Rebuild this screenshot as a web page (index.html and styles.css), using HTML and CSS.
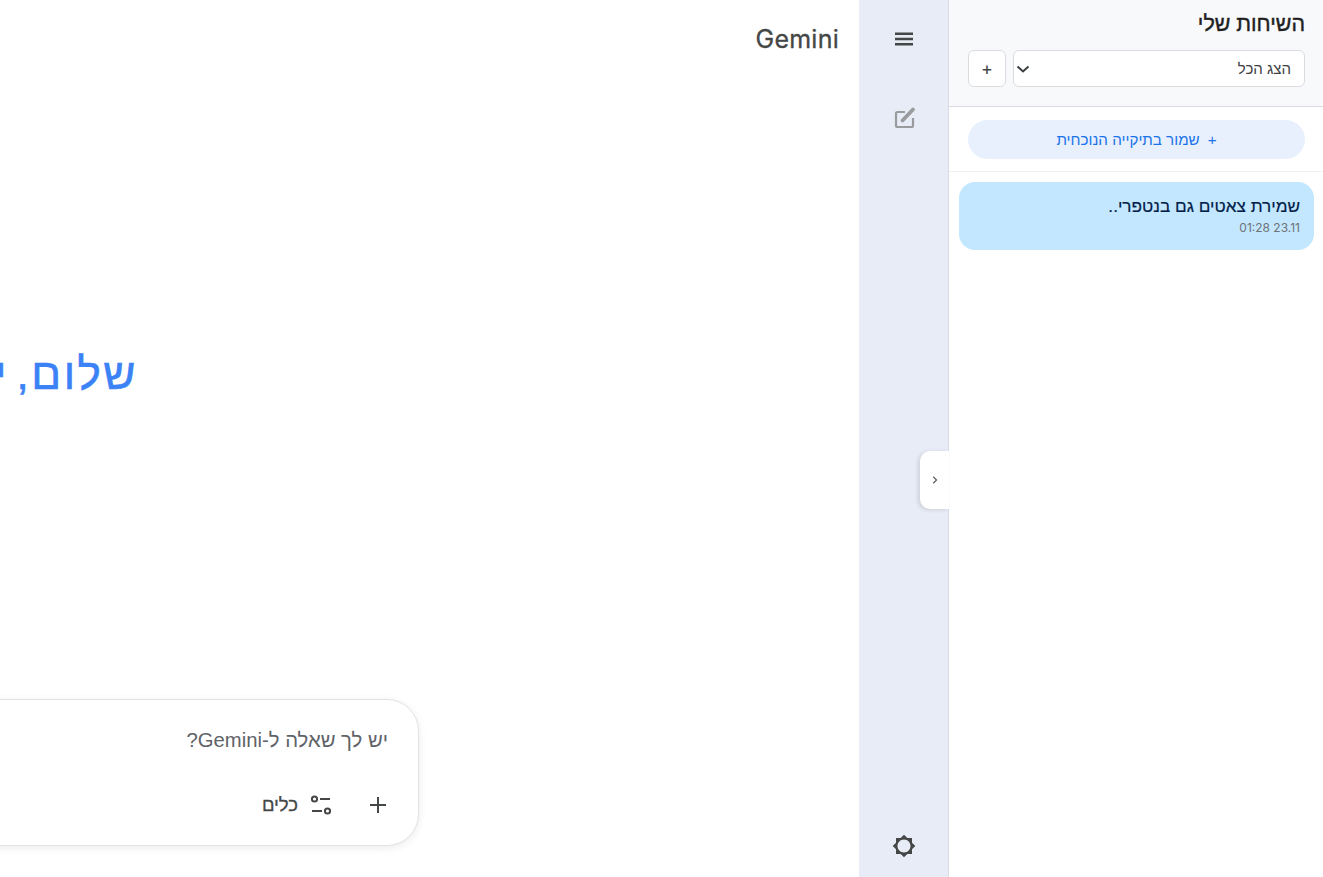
FILE: index.html
```html
<!DOCTYPE html>
<html lang="he">
  <head>
    <meta charset="UTF-8" />
    <meta name="viewport" content="width=device-width, initial-scale=1.0" />
    <title>Gemini</title>
    <link rel="stylesheet" href="styles.css">
  </head>
  <body>
    <div class="app">
      <!-- Main chat area -->
      <main class="main">
        <div class="brand">Gemini</div>
        <div class="greeting">שלום, י</div>
        <div class="composer">
          <div class="composer-text">יש לך שאלה ל-Gemini?</div>
          <div class="composer-tools">
            <svg class="icon-plus" width="24" height="24" viewBox="0 0 24 24">
              <path d="M12 4v16M4 12h16" fill="none" stroke="#444746" stroke-width="2" />
            </svg>
            <div class="tools-btn">
              <svg width="24" height="24" viewBox="0 0 24 24" fill="none" stroke="#444746" stroke-width="2">
                <circle cx="5.500" cy="6" r="2.600" />
                <path d="M11 6h10" />
                <circle cx="18.500" cy="18" r="2.600" />
                <path d="M3 18h10" />
              </svg>
              <span>כלים</span>
            </div>
          </div>
        </div>
      </main>

      <!-- Icon rail -->
      <nav class="rail">
        <svg class="rail-icon" width="24" height="24" viewBox="0 0 24 24">
          <path d="M3 5.500h18V8H3zM3 10.750h18v2.500H3zM3 16h18v2.500H3z" fill="#444746" />
        </svg>
        <svg class="rail-icon rail-edit" width="24" height="24" viewBox="0 0 24 24" fill="none" stroke="#9a9b9e">
          <path d="M13 6H5.500A1.500 1.500 0 0 0 4 7.500v12A1.500 1.500 0 0 0 5.500 21h14a1.500 1.500 0 0 0 1.500-1.500V12" stroke-width="2.200" />
          <path d="M10.500 14.500 21 3.500" stroke-width="3.800" stroke-linecap="round" />
        </svg>
        <svg class="rail-icon rail-theme" width="24" height="24" viewBox="0 0 24 24">
          <path d="M20 15.310 23.310 12 20 8.690V4h-4.690L12 .69 8.690 4H4v4.690L.69 12 4 15.310V20h4.690L12 23.310 15.310 20H20v-4.690zM12 18.500c-3.590 0-6.500-2.910-6.500-6.500S8.410 5.500 12 5.500s6.500 2.910 6.500 6.500-2.910 6.500-6.500 6.500z" fill="#444746" />
        </svg>
      </nav>

      <!-- Saved chats -->
      <aside class="panel">
        <button class="panel-toggle" type="button">
          <svg width="10" height="10" viewBox="0 0 10 10">
            <path d="M3.200 1.800 6.500 5 3.200 8.200" fill="none" stroke="#5f6368" stroke-width="1.300" />
          </svg>
        </button>
        <div class="panel-head">
          <h1>השיחות שלי</h1>
          <div class="filter-row">
            <select class="filter-select">
              <option>הצג הכל</option>
            </select>
            <button class="add-btn" type="button">+</button>
          </div>
        </div>
        <div class="save-row">
          <button class="save-btn" type="button"><span class="save-plus">+</span>שמור בתיקייה הנוכחית</button>
        </div>
        <div class="chat-list">
          <div class="chat-item">
            <div class="chat-title">שמירת צאטים גם בנטפרי..</div>
            <div class="chat-date">01:28 23.11</div>
          </div>
        </div>
      </aside>
    </div>
  </body>
</html>
```

FILE: styles.css
```css
/* Global Styles */
html,
body {
  height: 100%;
}

body {
  font-family: "Liberation Sans", "Noto Sans", sans-serif;
  background-color: #fff;
  margin: 0;
  padding: 0;
  color: #1f1f1f;
  overflow: hidden;
}

.app {
  display: flex;
  height: 100%;
}

/* Main area */
.main {
  flex: 1;
  min-width: 0;
  overflow: hidden;
  display: flex;
  flex-direction: column;
  align-items: flex-end;
  box-sizing: border-box;
  padding: 0 20px 31px 0;
}

.brand {
  font-family: "Inter", sans-serif;
  font-size: 25px;
  letter-spacing: 0.25px;
  color: #444746;
  line-height: 30px;
  margin-top: 24px;
  -webkit-text-stroke: 0.3px #444746;
}

.greeting {
  direction: rtl;
  flex-shrink: 0;
  width: 700px;
  margin: 290px 701px 0 0;
  font-size: 44px;
  letter-spacing: 2.5px;
  word-spacing: -7px;
  line-height: 60px;
  color: #3b82f6;
  -webkit-text-stroke: 0.6px #3b82f6;
}

.composer {
  direction: rtl;
  flex-shrink: 0;
  width: 760px;
  height: 147px;
  box-sizing: border-box;
  margin-top: auto;
  margin-right: 420px;
  padding: 28px 30px 0;
  background-color: #fff;
  border: 1px solid #e3e3e3;
  border-radius: 32px;
  box-shadow: 0 2px 8px rgba(0, 0, 0, 0.08);
}

.composer-text {
  font-size: 20.3px;
  line-height: 24px;
  color: #5f6368;
}

.composer-tools {
  display: flex;
  align-items: center;
  gap: 33px;
  margin-top: 41px;
  margin-right: -2px;
}

.tools-btn {
  display: flex;
  align-items: center;
  gap: 11px;
  font-size: 18.500px;
  color: #444746;
  -webkit-text-stroke: 0.3px #444746;
}

/* Icon rail */
.rail {
  width: 90px;
  flex-shrink: 0;
  display: flex;
  flex-direction: column;
  align-items: center;
  box-sizing: border-box;
  padding: 27px 0 19px;
  background-color: #e8ecf6;
  border-right: 1px solid #d8dbe3;
}

.rail-edit {
  margin-top: 55px;
}

.rail-theme {
  margin-top: auto;
}

/* Saved chats panel */
.panel {
  width: 374px;
  flex-shrink: 0;
  position: relative;
  direction: rtl;
  background-color: #fff;
}

.panel-toggle {
  position: absolute;
  left: -29px;
  top: 451px;
  width: 29px;
  height: 58px;
  padding: 0;
  border: none;
  border-radius: 10px 0 0 10px;
  background-color: #fff;
  box-shadow: -2px 1px 4px rgba(0, 0, 0, 0.12);
  display: flex;
  align-items: center;
  justify-content: center;
}

.panel-head {
  height: 107px;
  box-sizing: border-box;
  padding: 11px 18px 0 19px;
  background-color: #f8f9fb;
  border-bottom: 1px solid #dadce0;
}

.panel-head h1 {
  margin: 0;
  font-size: 21.400px;
  line-height: 26px;
  font-weight: 400;
  color: #1f1f1f;
  -webkit-text-stroke: 0.4px #1f1f1f;
}

.filter-row {
  display: flex;
  gap: 7px;
  margin-top: 13px;
}

.filter-select {
  flex: 1;
  height: 37px;
  padding: 0 13px;
  font-family: inherit;
  font-size: 15px;
  color: #3c4043;
  background-color: #fff;
  background-image: url("data:image/svg+xml,%3Csvg xmlns='http://www.w3.org/2000/svg' width='14' height='8'%3E%3Cpath d='M1.500 1.500 7 6.500l5.500-5' fill='none' stroke='%233c4043' stroke-width='2'/%3E%3C/svg%3E");
  background-repeat: no-repeat;
  background-position: 2px 14px;
  border: 1px solid #dadce0;
  border-radius: 6px;
  appearance: none;
}

.add-btn {
  width: 38px;
  height: 37px;
  padding: 0;
  font-family: "Inter", sans-serif;
  font-size: 18px;
  color: #444746;
  background-color: #fff;
  border: 1px solid #dadce0;
  border-radius: 6px;
}

.save-row {
  padding: 13px 18px 12px 19px;
  border-bottom: 1px solid #f1f1f1;
}

.save-btn {
  width: 100%;
  height: 39px;
  padding: 0;
  font-family: inherit;
  font-size: 15.200px;
  color: #1a73e8;
  background-color: #e8f0fe;
  border: none;
  border-radius: 20px;
}

.save-plus {
  margin-left: 8px;
}

.chat-list {
  padding: 10px 9px 0 10px;
}

.chat-item {
  height: 68px;
  box-sizing: border-box;
  padding: 14px 14px 0;
  background-color: #c2e7ff;
  border-radius: 16px;
}

.chat-title {
  font-size: 17.200px;
  line-height: 20px;
  color: #041e49;
  -webkit-text-stroke: 0.2px #041e49;
}

.chat-date {
  direction: ltr;
  text-align: right;
  font-family: "Inter", sans-serif;
  font-size: 12px;
  line-height: 18px;
  margin-top: 3px;
  color: #6f7276;
}
```
